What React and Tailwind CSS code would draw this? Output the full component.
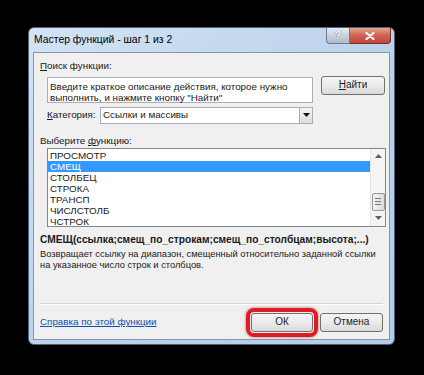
import { useState } from "react";

const functions = ["ПРОСМОТР", "СМЕЩ", "СТОЛБЕЦ", "СТРОКА", "ТРАНСП", "ЧИСЛСТОЛБ", "ЧСТРОК"];

function WinButton({ children, className = "" }) {
  return (
    <div
      className={`flex items-center justify-center rounded-[3px] border border-[#707070] bg-gradient-to-b from-[#f4f4f4] via-[#ebebeb] to-[#d9d9d9] text-[10px] text-[#1e1e1e] ${className}`}
    >
      {children}
    </div>
  );
}

export default function App() {
  const [selected] = useState(1);

  return (
    <div className="w-[424px] h-[375px] bg-black overflow-hidden pt-[27px] pl-[28px] font-['Liberation_Sans',Arial,sans-serif]">
      {/* window frame */}
      <div className="w-[367px] h-[318px] rounded-[6px] border border-[#4f6277] bg-gradient-to-br from-[#d3e3f4] via-[#bcd3eb] to-[#b3cbe6] flex flex-col px-[4px] pb-[4px]">
        {/* title bar */}
        <div className="h-[24px] flex items-start justify-between">
          <div className="pl-[1px] pt-[7px] text-[10.4px] text-black leading-none">Мастер функций - шаг 1 из 2</div>
          <div className="flex mr-[-1px]">
            <div className="w-[24px] h-[16px] rounded-bl-[4px] border border-[#6d7a8c] border-t-0 bg-gradient-to-b from-[#e3eaf2] to-[#aebbcb] flex items-center justify-center text-[10px] font-bold text-white [text-shadow:0_0_1px_#334]">
              ?
            </div>
            <div className="w-[41px] h-[16px] rounded-br-[4px] border border-[#7a2b25] border-t-0 border-l-0 bg-gradient-to-b from-[#e9a493] via-[#d0624f] to-[#c0463a] flex items-center justify-center">
              <svg width="10" height="8" viewBox="0 0 10 8">
                <path d="M1.5 1 L8.5 7 M8.5 1 L1.5 7" stroke="#fff" strokeWidth="2.2" strokeLinecap="round" />
              </svg>
            </div>
          </div>
        </div>

        {/* client area */}
        <div className="flex-1 border border-[#8596ab] bg-[#f0f0f0] flex flex-col text-[9.8px] text-[#1a1a1a] leading-none">
          <div className="ml-[6px] mt-[8px]">
            <span className="underline">П</span>оиск функции:
          </div>

          <div className="flex mt-[6px] ml-[13px]">
            <div className="w-[266px] h-[26px] border border-[#abadb3] bg-white px-[2px] pt-[3px] leading-[11px] whitespace-nowrap">
              Введите краткое описание действия, которое нужно
              <br />
              выполнить, и нажмите кнопку "Найти"
            </div>
            <WinButton className="ml-[8px] w-[64px] h-[19px] -mt-[1px]">
              <span className="underline">Н</span>айти
            </WinButton>
          </div>

          <div className="flex items-center mt-[4px] ml-[13px]">
            <div className="w-[53px]">
              <span className="underline">К</span>атегория:
            </div>
            <div className="w-[213px] h-[17px] border border-[#abadb3] bg-white flex items-center">
              <div className="flex-1 pl-[2px]">Ссылки и массивы</div>
              <div className="w-[13px] h-[15px] border-l border-[#abadb3] bg-gradient-to-b from-[#f5f5f5] to-[#dcdcdc] flex items-center justify-center">
                <svg width="7" height="4" viewBox="0 0 7 4">
                  <path d="M0 0 L7 0 L3.5 4 Z" fill="#111" />
                </svg>
              </div>
            </div>
          </div>

          <div className="ml-[6px] mt-[12px]">
            Выберите <span className="underline">ф</span>ункцию:
          </div>

          {/* list box */}
          <div className="ml-[13px] mt-[2px] w-[339px] h-[79px] border border-[#828790] bg-white flex">
            <div className="flex-1 pt-[1px]">
              {functions.map((f, i) => (
                <div
                  key={f}
                  className={`h-[11px] leading-[11px] pl-[2px] ${i === selected ? "bg-[#3399ff] text-white" : ""}`}
                >
                  {f}
                </div>
              ))}
            </div>
            <div className="w-[15px] bg-[#f4f4f4] border-l border-[#e6e6e6] flex flex-col items-center">
              <div className="h-[15px] flex items-center justify-center">
                <svg width="7" height="4" viewBox="0 0 7 4">
                  <path d="M0 4 L7 4 L3.5 0 Z" fill="#606060" />
                </svg>
              </div>
              <div className="flex-1" />
              <div className="w-[13px] h-[18px] rounded-[2px] border border-[#9a9a9a] bg-gradient-to-r from-[#f4f4f4] to-[#dcdcdc] flex flex-col items-center justify-center gap-[2px]">
                <div className="w-[6px] h-px bg-[#777]" />
                <div className="w-[6px] h-px bg-[#777]" />
                <div className="w-[6px] h-px bg-[#777]" />
              </div>
              <div className="h-[15px] flex items-center justify-center">
                <svg width="7" height="4" viewBox="0 0 7 4">
                  <path d="M0 0 L7 0 L3.5 4 Z" fill="#606060" />
                </svg>
              </div>
            </div>
          </div>

          <div className="ml-[6px] mt-[8px] font-bold text-[10.2px] whitespace-nowrap">
            СМЕЩ(ссылка;смещ_по_строкам;смещ_по_столбцам;высота;...)
          </div>
          <div className="ml-[6px] mt-[4px] leading-[11px] whitespace-nowrap text-[9.3px]">
            Возвращает ссылку на диапазон, смещенный относительно заданной ссылки
            <br />
            на указанное число строк и столбцов.
          </div>

          <div className="flex-1" />
          <div className="mx-[6px] h-px bg-[#d5d5d5] border-b border-white box-content" />

          <div className="flex items-center h-[34px] pl-[6px] pr-[6px]">
            <div className="text-[#0b4fb3] underline flex-1">Справка по этой функции</div>
            <div className="rounded-[8px] border-[4px] border-[#e21a22] p-[1px] shadow-[0_0_3px_rgba(120,0,0,0.6)] mr-[2px]">
              <WinButton className="w-[62px] h-[19px] border-[#3c7fb1] from-[#eaf6fd] via-[#d9f0fc] to-[#bee6fd]">
                ОК
              </WinButton>
            </div>
            <WinButton className="w-[63px] h-[19px]">Отмена</WinButton>
          </div>
        </div>
      </div>
    </div>
  );
}
